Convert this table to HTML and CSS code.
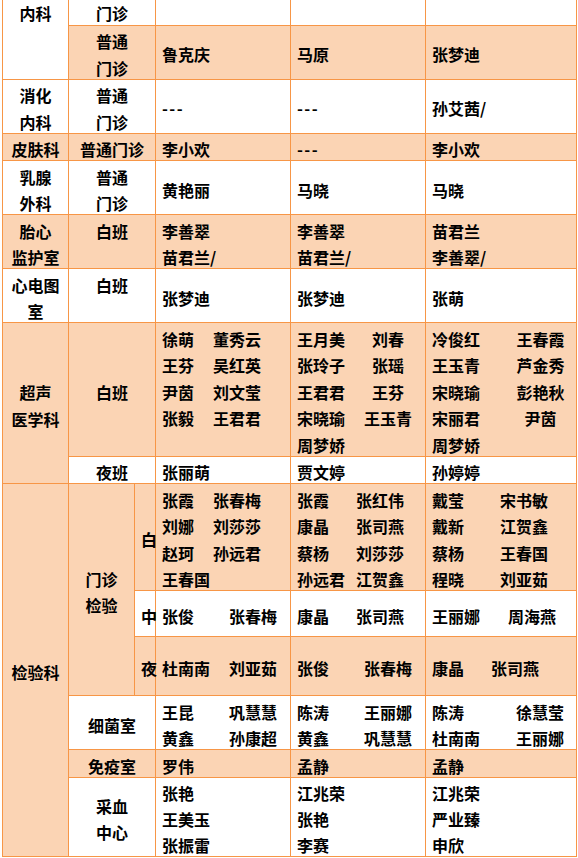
FILE: index.html
```html
<!DOCTYPE html>
<html lang="zh-CN">
<head>
<meta charset="utf-8">
<title>门诊排班表</title>
<link rel="stylesheet" href="styles.css">
</head>
<body>
<table class="roster">
  <colgroup>
    <col class="c-dept"><col class="c-type"><col class="c-sub"><col class="c-mid"><col class="c-mid"><col class="c-last">
  </colgroup>
  <tbody>
    <tr class="r-top">
      <td class="dept al-top" rowspan="2">内科</td>
      <td class="type al-top" colspan="2">门诊</td>
      <td class="names"></td><td class="names"></td><td class="names"></td>
    </tr>
    <tr class="pk">
      <td class="type" colspan="2">普通<br>门诊</td>
      <td class="names">鲁克庆</td><td class="names">马原</td><td class="names">张梦迪</td>
    </tr>
    <tr>
      <td class="dept">消化<br>内科</td>
      <td class="type" colspan="2">普通<br>门诊</td>
      <td class="names dash">---</td><td class="names dash">---</td><td class="names">孙艾茜/</td>
    </tr>
    <tr class="pk">
      <td class="dept">皮肤科</td>
      <td class="type" colspan="2">普通门诊</td>
      <td class="names">李小欢</td><td class="names dash">---</td><td class="names">李小欢</td>
    </tr>
    <tr>
      <td class="dept">乳腺<br>外科</td>
      <td class="type" colspan="2">普通<br>门诊</td>
      <td class="names">黄艳丽</td><td class="names">马晓</td><td class="names">马晓</td>
    </tr>
    <tr class="pk">
      <td class="dept">胎心<br>监护室</td>
      <td class="type al-top" colspan="2">白班</td>
      <td class="names">李善翠<br>苗君兰/</td><td class="names">李善翠<br>苗君兰/</td><td class="names">苗君兰<br>李善翠/</td>
    </tr>
    <tr>
      <td class="dept">心电图<br>室</td>
      <td class="type al-top" colspan="2">白班</td>
      <td class="names">张梦迪</td><td class="names">张梦迪</td><td class="names">张萌</td>
    </tr>
    <tr class="pk">
      <td class="dept" rowspan="2">超声<br>医学科</td>
      <td class="type" colspan="2">白班</td>
      <td class="names al-top">
        <div class="pair o51"><span>徐萌</span><span>董秀云</span><span>王芬</span><span>吴红英</span><span>尹茵</span><span>刘文莹</span><span>张毅</span><span>王君君</span></div>
      </td>
      <td class="names al-top">
        <div class="pair cen4"><span>王月美</span><span>刘春</span><span>张玲子</span><span>张瑶</span><span>王君君</span><span>王芬</span><span>宋晓瑜</span><span>王玉青</span><span>周梦娇</span></div>
      </td>
      <td class="names al-top">
        <div class="pair cen5"><span>冷俊红</span><span>王春霞</span><span>王玉青</span><span>芦金秀</span><span>宋晓瑜</span><span>彭艳秋</span><span>宋丽君</span><span>尹茵</span><span>周梦娇</span></div>
      </td>
    </tr>
    <tr>
      <td class="type" colspan="2">夜班</td>
      <td class="names">张丽萌</td><td class="names">贾文婷</td><td class="names">孙婷婷</td>
    </tr>
    <tr class="pk">
      <td class="dept" rowspan="6">检验科</td>
      <td class="type" rowspan="3">门诊<br>检验</td>
      <td class="sub">白</td>
      <td class="names al-top">
        <div class="pair o51"><span>张霞</span><span>张春梅</span><span>刘娜</span><span>刘莎莎</span><span>赵珂</span><span>孙远君</span><span>王春国</span></div>
      </td>
      <td class="names al-top">
        <div class="pair o59"><span>张霞</span><span>张红伟</span><span>康晶</span><span>张司燕</span><span>蔡杨</span><span>刘莎莎</span><span>孙远君</span><span>江贺鑫</span></div>
      </td>
      <td class="names al-top">
        <div class="pair o68"><span>戴莹</span><span>宋书敏</span><span>戴新</span><span>江贺鑫</span><span>蔡杨</span><span>王春国</span><span>程晓</span><span>刘亚茹</span></div>
      </td>
    </tr>
    <tr class="r-mid">
      <td class="sub">中</td>
      <td class="names"><div class="pair o67"><span>张俊</span><span>张春梅</span></div></td>
      <td class="names"><div class="pair o59"><span>康晶</span><span>张司燕</span></div></td>
      <td class="names"><div class="pair o76"><span>王丽娜</span><span>周海燕</span></div></td>
    </tr>
    <tr class="pk r-night">
      <td class="sub">夜</td>
      <td class="names"><div class="pair o67"><span>杜南南</span><span>刘亚茹</span></div></td>
      <td class="names"><div class="pair o67"><span>张俊</span><span>张春梅</span></div></td>
      <td class="names"><div class="pair o59"><span>康晶</span><span>张司燕</span></div></td>
    </tr>
    <tr>
      <td class="type" colspan="2">细菌室</td>
      <td class="names"><div class="pair o67"><span>王昆</span><span>巩慧慧</span><span>黄鑫</span><span>孙康超</span></div></td>
      <td class="names"><div class="pair o67"><span>陈涛</span><span>王丽娜</span><span>黄鑫</span><span>巩慧慧</span></div></td>
      <td class="names"><div class="pair o84"><span>陈涛</span><span>徐慧莹</span><span>杜南南</span><span>王丽娜</span></div></td>
    </tr>
    <tr class="pk">
      <td class="type" colspan="2">免疫室</td>
      <td class="names">罗伟</td><td class="names">孟静</td><td class="names">孟静</td>
    </tr>
    <tr class="r-blood">
      <td class="type" colspan="2">采血<br>中心</td>
      <td class="names">张艳<br>王美玉<br>张振雷</td>
      <td class="names">江兆荣<br>张艳<br>李赛</td>
      <td class="names">江兆荣<br>严业臻<br>申欣</td>
    </tr>
  </tbody>
</table>
</body>
</html>
```

FILE: styles.css
```css
html, body {
  margin: 0;
  padding: 0;
  background: #ffffff;
}

body {
  font-family: "Noto Sans CJK SC", "Noto Sans", sans-serif;
  font-weight: 700;
  font-size: 16px;
  color: #000000;
}

.roster {
  border-collapse: collapse;
  table-layout: fixed;
  width: 574px;
  margin-left: 2px;
  line-height: 26.5px;
}

.c-dept { width: 66px; }
.c-type { width: 66px; }
.c-sub { width: 21px; }
.c-mid { width: 135px; }
.c-last { width: 151px; }

/* text sits a little low in its line, as in the original;
   the shift is taken back by the trailing block so row heights stay */
.roster td {
  --shift: 2.5px;
  border: 1px solid #f79646;
  padding: var(--shift) 0 0 0;
  vertical-align: middle;
  white-space: nowrap;
  background: #ffffff;
}

.roster td::after {
  content: "";
  display: block;
  margin-top: calc(-1 * var(--shift));
}

.roster tr.pk td {
  background: #fbd4b4;
}

.roster .dept,
.roster .type {
  text-align: center;
}

.roster .names {
  text-align: left;
  padding-left: 6px;
}

.roster .dash {
  letter-spacing: 1.4px;
}

.roster .sub {
  text-align: left;
  padding-left: 6px;
  overflow: visible;
}

.roster .al-top {
  vertical-align: top;
}

.r-top td {
  --shift: 1px;
  border-top: none;
  line-height: 24px;
}

.r-top { height: 25px; }
.r-mid { height: 46px; }
.r-night { height: 59px; }

.r-blood td {
  line-height: 26px;
}

.pair {
  display: grid;
  grid-auto-rows: 26.5px;
}

.pair.o51 { grid-template-columns: 51px auto; }
.pair.o59 { grid-template-columns: 59px auto; }
.pair.o67 { grid-template-columns: 67px auto; }
.pair.o68 { grid-template-columns: 68px auto; }
.pair.o76 { grid-template-columns: 76px auto; }
.pair.o84 { grid-template-columns: 84px auto; }

.pair.cen4 { grid-template-columns: 56px 70px; }
.pair.cen5 { grid-template-columns: 72px 73px; }

.pair.cen4 span:nth-child(2n),
.pair.cen5 span:nth-child(2n) {
  text-align: center;
}
```
